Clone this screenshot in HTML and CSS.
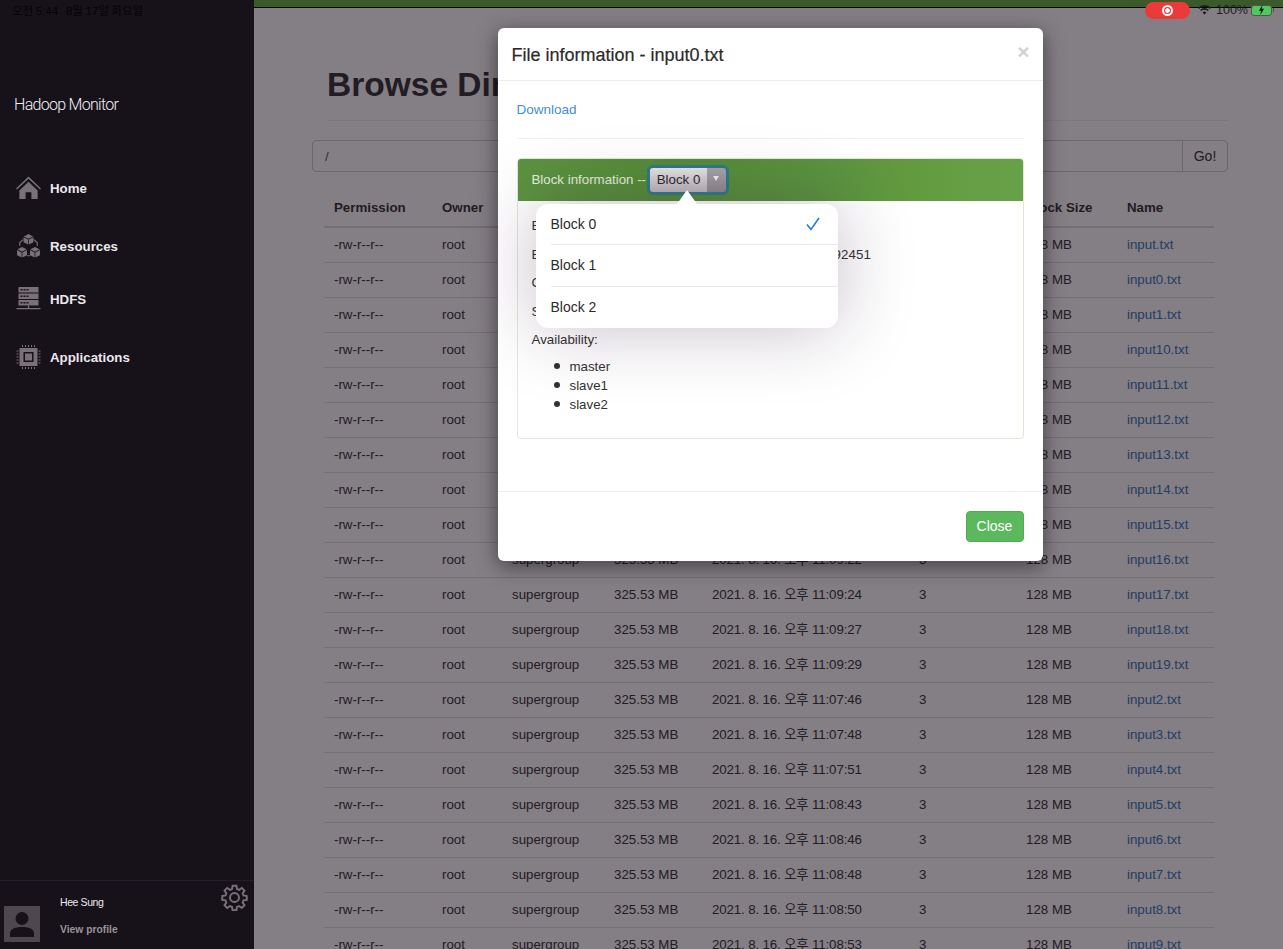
FILE: index.html
```html
<!DOCTYPE html>
<html>
<head>
    <title>Hadoop Monitor</title>
    <meta charset="utf-8">
    <link rel="stylesheet" href="styles.css">
</head>
<body>
    <div class="statusbar">
        <div class="status-time">오전 5:44&nbsp;&nbsp;&nbsp;8월 17일 화요일</div>
        <div class="status-right">
            <div class="rec-pill"><span class="rec-dot"></span></div>
            <svg class="wifi" viewBox="0 0 16 12"><path d="M8 11.500 5.600 9a3.400 3.400 0 0 1 4.800 0zM3.900 7.300 2.600 5.900a7.600 7.600 0 0 1 10.800 0l-1.300 1.400a5.700 5.700 0 0 0-8.200 0zM1.300 4.700 0 3.300a11.300 11.300 0 0 1 16 0l-1.300 1.400a9.400 9.400 0 0 0-13.400 0z"/></svg>
            <span class="battery-text">100%</span>
            <div class="battery"><svg viewBox="0 0 8 12"><path d="M5 0 1 7h2.500L2.500 12 7 4.600H4.300z"/></svg></div>
            <span class="battery-nub"></span>
        </div>
    </div>

    <div class="sidebar">
        <div class="brand">Hadoop Monitor</div>
        <ul class="nav">
            <li>
                <svg viewBox="0 0 26 24"><path d="M13 0 0 12.500l1 1L13 2.500l12 11 1-1zM3.500 14.500 13 5.500l9.500 9V23.500h-6.500v-7h-6v7H3.500z"/></svg>
                <span>Home</span>
            </li>
            <li>
                <svg viewBox="0 0 26 26"><path d="M13 0l5 2.600-5 2.600-5-2.600zM7.600 3.400l5 2.600v5.500l-5-2.600zM18.400 3.400l-5 2.600v5.500l5-2.600zM6 14l5 2.600-5 2.600-5-2.600zM.6 17.400l5 2.600v5.500l-5-2.600zM11.400 17.400l-5 2.600v5.500l5-2.600zM20 14l5 2.600-5 2.600-5-2.600zM14.600 17.400l5 2.600v5.500l-5-2.600zM25.400 17.400l-5 2.600v5.500l5-2.600z"/><path class="line" d="M7 6 3.500 9.500V13M19 6l3.500 3.500V13M11.500 23.500h3"/></svg>
                <span>Resources</span>
            </li>
            <li>
                <svg viewBox="0 0 24 24"><path fill-rule="evenodd" d="M2 0h20v5.500H2zM2 6.500h20V12H2zM2 13h20v5.500H2zM4 2v1.500h2V2zm3 0v1.500h2V2zm3 0v1.500h2V2zM4 8.500V10h2V8.500zm3 0V10h2V8.500zm3 0V10h2V8.500zM4 15v1.500h2V15zm3 0v1.500h2V15zm3 0v1.500h2V15z"/><path d="M11.300 18.500h1.400V21H24v1.300H0V21h11.300z"/></svg>
                <span>HDFS</span>
            </li>
            <li>
                <svg viewBox="0 0 24 24"><path fill-rule="evenodd" d="M3 3h18v18H3zM7 7v10h10V7zm1.500 1.500h7v7h-7z"/><path class="line thin" d="M6 0v2M9 0v2M12 0v2M15 0v2M18 0v2M6 22v2M9 22v2M12 22v2M15 22v2M18 22v2M0 6h2M0 9h2M0 12h2M0 15h2M0 18h2M22 6h2M22 9h2M22 12h2M22 15h2M22 18h2"/></svg>
                <span>Applications</span>
            </li>
        </ul>
        <div class="user">
            <div class="avatar">
                <svg viewBox="0 0 36 36"><circle cx="18" cy="12.500" r="6.500"/><path d="M6 31v-3.500C6 23 11 21 18 21s12 2 12 6.500V31z"/></svg>
            </div>
            <div class="user-info">
                <div class="user-name">Hee Sung</div>
                <div class="user-link">View profile</div>
            </div>
            <svg class="gear" viewBox="0 0 24 24"><path d="M10.300 1.500h3.400l.5 2.900 1.900.8 2.400-1.700 2.400 2.400-1.700 2.400.8 1.900 2.900.5v3.400l-2.900.5-.8 1.900 1.700 2.400-2.400 2.400-2.400-1.700-1.900.8-.5 2.900h-3.400l-.5-2.900-1.900-.8-2.400 1.700-2.400-2.400 1.700-2.400-.8-1.900-2.900-.5v-3.400l2.900-.5.8-1.900-1.700-2.400 2.400-2.400 2.400 1.700 1.900-.8z"/><circle cx="12" cy="12" r="4"/></svg>
        </div>
    </div>

    <div class="main">
        <div class="topbar"></div>
        <div class="content">
            <h1>Browse Directory</h1>
            <div class="path-row">
                <input class="path-input" value="/">
                <button class="go-btn">Go!</button>
            </div>
            <table class="files">
                <thead>
                    <tr><th>Permission</th><th>Owner</th><th>Group</th><th>Size</th><th>Last Modified</th><th>Replication</th><th>Block Size</th><th>Name</th></tr>
                </thead>
                <tbody>
                    <tr><td>-rw-r--r--</td><td>root</td><td>supergroup</td><td>325.53 MB</td><td>2021. 8. 16. 오후 11:06:58</td><td>3</td><td>128 MB</td><td><a href="#">input.txt</a></td></tr>
                    <tr><td>-rw-r--r--</td><td>root</td><td>supergroup</td><td>325.53 MB</td><td>2021. 8. 16. 오후 11:07:01</td><td>3</td><td>128 MB</td><td><a href="#">input0.txt</a></td></tr>
                    <tr><td>-rw-r--r--</td><td>root</td><td>supergroup</td><td>325.53 MB</td><td>2021. 8. 16. 오후 11:07:04</td><td>3</td><td>128 MB</td><td><a href="#">input1.txt</a></td></tr>
                    <tr><td>-rw-r--r--</td><td>root</td><td>supergroup</td><td>325.53 MB</td><td>2021. 8. 16. 오후 11:09:01</td><td>3</td><td>128 MB</td><td><a href="#">input10.txt</a></td></tr>
                    <tr><td>-rw-r--r--</td><td>root</td><td>supergroup</td><td>325.53 MB</td><td>2021. 8. 16. 오후 11:09:04</td><td>3</td><td>128 MB</td><td><a href="#">input11.txt</a></td></tr>
                    <tr><td>-rw-r--r--</td><td>root</td><td>supergroup</td><td>325.53 MB</td><td>2021. 8. 16. 오후 11:09:07</td><td>3</td><td>128 MB</td><td><a href="#">input12.txt</a></td></tr>
                    <tr><td>-rw-r--r--</td><td>root</td><td>supergroup</td><td>325.53 MB</td><td>2021. 8. 16. 오후 11:09:10</td><td>3</td><td>128 MB</td><td><a href="#">input13.txt</a></td></tr>
                    <tr><td>-rw-r--r--</td><td>root</td><td>supergroup</td><td>325.53 MB</td><td>2021. 8. 16. 오후 11:09:13</td><td>3</td><td>128 MB</td><td><a href="#">input14.txt</a></td></tr>
                    <tr><td>-rw-r--r--</td><td>root</td><td>supergroup</td><td>325.53 MB</td><td>2021. 8. 16. 오후 11:09:18</td><td>3</td><td>128 MB</td><td><a href="#">input15.txt</a></td></tr>
                    <tr><td>-rw-r--r--</td><td>root</td><td>supergroup</td><td>325.53 MB</td><td>2021. 8. 16. 오후 11:09:22</td><td>3</td><td>128 MB</td><td><a href="#">input16.txt</a></td></tr>
                    <tr><td>-rw-r--r--</td><td>root</td><td>supergroup</td><td>325.53 MB</td><td>2021. 8. 16. 오후 11:09:24</td><td>3</td><td>128 MB</td><td><a href="#">input17.txt</a></td></tr>
                    <tr><td>-rw-r--r--</td><td>root</td><td>supergroup</td><td>325.53 MB</td><td>2021. 8. 16. 오후 11:09:27</td><td>3</td><td>128 MB</td><td><a href="#">input18.txt</a></td></tr>
                    <tr><td>-rw-r--r--</td><td>root</td><td>supergroup</td><td>325.53 MB</td><td>2021. 8. 16. 오후 11:09:29</td><td>3</td><td>128 MB</td><td><a href="#">input19.txt</a></td></tr>
                    <tr><td>-rw-r--r--</td><td>root</td><td>supergroup</td><td>325.53 MB</td><td>2021. 8. 16. 오후 11:07:46</td><td>3</td><td>128 MB</td><td><a href="#">input2.txt</a></td></tr>
                    <tr><td>-rw-r--r--</td><td>root</td><td>supergroup</td><td>325.53 MB</td><td>2021. 8. 16. 오후 11:07:48</td><td>3</td><td>128 MB</td><td><a href="#">input3.txt</a></td></tr>
                    <tr><td>-rw-r--r--</td><td>root</td><td>supergroup</td><td>325.53 MB</td><td>2021. 8. 16. 오후 11:07:51</td><td>3</td><td>128 MB</td><td><a href="#">input4.txt</a></td></tr>
                    <tr><td>-rw-r--r--</td><td>root</td><td>supergroup</td><td>325.53 MB</td><td>2021. 8. 16. 오후 11:08:43</td><td>3</td><td>128 MB</td><td><a href="#">input5.txt</a></td></tr>
                    <tr><td>-rw-r--r--</td><td>root</td><td>supergroup</td><td>325.53 MB</td><td>2021. 8. 16. 오후 11:08:46</td><td>3</td><td>128 MB</td><td><a href="#">input6.txt</a></td></tr>
                    <tr><td>-rw-r--r--</td><td>root</td><td>supergroup</td><td>325.53 MB</td><td>2021. 8. 16. 오후 11:08:48</td><td>3</td><td>128 MB</td><td><a href="#">input7.txt</a></td></tr>
                    <tr><td>-rw-r--r--</td><td>root</td><td>supergroup</td><td>325.53 MB</td><td>2021. 8. 16. 오후 11:08:50</td><td>3</td><td>128 MB</td><td><a href="#">input8.txt</a></td></tr>
                    <tr><td>-rw-r--r--</td><td>root</td><td>supergroup</td><td>325.53 MB</td><td>2021. 8. 16. 오후 11:08:53</td><td>3</td><td>128 MB</td><td><a href="#">input9.txt</a></td></tr>
                </tbody>
            </table>
        </div>

        <div class="backdrop">
            <div class="modal">
                <div class="modal-head">
                    <h4>File information - input0.txt</h4>
                    <span class="modal-x">×</span>
                </div>
                <div class="modal-body">
                    <a class="download" href="#">Download</a>
                    <hr>
                    <div class="panel">
                        <div class="panel-head">
                            <span>Block information --</span>
                            <div class="select-wrap">
                                <div class="select"><span class="select-label">Block 0</span><span class="select-arrow"></span></div>
                            </div>
                        </div>
                        <div class="panel-body">
                            <p>Block ID: 1073741826</p>
                            <p class="pool-id">Block Pool ID: BP-112937405-192.168.0.10-1629092451</p>
                            <p>Generation Stamp: 1002</p>
                            <p>Size: 134217728</p>
                            <p>Availability:</p>
                            <ul>
                                <li>master</li>
                                <li>slave1</li>
                                <li>slave2</li>
                            </ul>
                        </div>
                    </div>
                </div>
                <div class="modal-foot">
                    <button class="close-btn">Close</button>
                </div>

                <div class="popup">
                    <div class="popup-row">Block 0<svg class="check" viewBox="0 0 14 14"><path d="M1 7.500 5 12.500 13 1"/></svg></div>
                    <div class="popup-row">Block 1</div>
                    <div class="popup-row">Block 2</div>
                </div>
            </div>
        </div>
    </div>
</body>
</html>
```

FILE: styles.css
```css
* { box-sizing: border-box; }
html, body { margin: 0; height: 949px; overflow: hidden; }
body { display: flex; font-family: "Liberation Sans", Arial, "Noto Sans CJK KR", sans-serif; font-size: 13.3px; color: #333; background: #17111a; }

/* ipad status bar, sits over everything */
.statusbar { position: absolute; top: 0; left: 0; width: 1283px; height: 20px; z-index: 20; display: flex; justify-content: space-between; align-items: center; font-size: 11.5px; }
.status-time { padding-left: 12px; margin-top: -1px; color: #050306; word-spacing: -0.6px; }
.status-right { display: flex; align-items: center; margin-right: 9px; color: #1f1b20; }
.rec-pill { width: 45px; height: 17px; border-radius: 9px; background: #ec3a3a; display: flex; align-items: center; justify-content: center; margin-right: 8px; }
.rec-dot { width: 11px; height: 11px; border-radius: 50%; border: 2px solid #fff; background: radial-gradient(circle, #fff 0 2px, #ec3a3a 2.5px); }
.wifi { width: 13px; height: 10px; fill: #1c181d; margin-right: 5px; }
.battery-text { font-size: 12.5px; margin-right: 3px; }
.battery { width: 21px; height: 11px; border-radius: 3px; border: 1px solid #555; background: #4fc95c; display: flex; align-items: center; justify-content: center; }
.battery svg { width: 7px; height: 10px; fill: #111; }
.battery-nub { width: 1px; height: 4px; margin-left: 1px; background: #555; }

/* sidebar */
.sidebar { width: 254px; height: 949px; flex: none; background: #17111a; position: relative; display: flex; flex-direction: column; }
.brand { padding: 95px 0 0 14px; font-family: Roboto, "Liberation Sans", sans-serif; font-weight: 300; font-size: 16px; line-height: 20px; letter-spacing: -0.7px; color: #f2f0f3; }
.nav { list-style: none; margin: 0; padding: 0 0 0 16px; }
.nav li { display: flex; align-items: center; height: 26px; color: #ebe8ec; font-weight: bold; font-size: 13.3px; }
.nav li:nth-child(1) { margin-top: 60px; }
.nav li:nth-child(2) { margin-top: 32px; }
.nav li:nth-child(3) { margin-top: 27px; }
.nav li:nth-child(4) { margin-top: 32px; }
.nav svg { width: 25px; height: 24px; fill: #7a7079; margin-right: 9px; flex: none; }
.nav .line { fill: none; stroke: #7a7079; stroke-width: 1.2; }
.nav .thin { stroke-width: 1; }
.user { margin-top: auto; height: 69px; border-top: 1px solid #251e28; position: relative; padding-left: 4px; display: flex; }
.avatar { width: 36px; height: 36px; background: #4e474f; margin-top: 25px; }
.avatar svg { display: block; width: 36px; height: 36px; fill: #17111a; }
.user-info { padding-left: 20px; }
.user-name { font-size: 10.5px; margin-top: 15px; line-height: 12px; letter-spacing: -0.4px; color: #eeebee; }
.user-link { font-size: 10.3px; margin-top: 16px; line-height: 12px; font-weight: bold; color: #9a9399; }
.gear { position: absolute; top: 3px; right: 6px; width: 27px; height: 27px; fill: none; stroke: #7a7079; stroke-width: 1.7; }

/* main column */
.main { flex: 1; height: 949px; position: relative; background: #fff; overflow: hidden; }
.topbar { height: 8px; background: #68b340; border-bottom: 1px solid #000; }
.content { padding: 0 55px 0 58px; }
h1 { margin: 0 0 0 15px; padding: 57px 0 15px; font-size: 33.500px; line-height: 40px; font-weight: bold; color: #333; border-bottom: 1px solid #eee; }
.path-row { display: flex; margin-top: 19px; }
.path-input { flex: 1; height: 32px; border: 1px solid #ccc; border-radius: 4px 0 0 4px; padding: 0 12px; font: inherit; color: #555; }
.go-btn { width: 46px; height: 32px; margin-left: -1px; border: 1px solid #ccc; border-radius: 0 4px 4px 0; background: #fff; font: inherit; font-size: 14px; color: #333; }
.files { width: 890px; margin: 18px 0 0 12px; border-collapse: collapse; table-layout: fixed; }
.files th { text-align: left; height: 37px; padding: 0 10px 1px; font-size: 13.3px; font-weight: bold; border-bottom: 2px solid #ddd; }
.files td { height: 35px; padding: 0 10px; line-height: 16px; border-top: 1px solid #ddd; }
.files td:nth-child(5) { letter-spacing: -0.13px; }
.files th:nth-child(1) { width: 108px; }
.files th:nth-child(2) { width: 70px; }
.files th:nth-child(3) { width: 102px; }
.files th:nth-child(4) { width: 98px; }
.files th:nth-child(5) { width: 207px; }
.files th:nth-child(6) { width: 107px; }
.files th:nth-child(7) { width: 101px; }
a { color: #337ab7; text-decoration: none; }

/* modal */
.backdrop { position: absolute; top: 0; left: 0; right: 0; bottom: 0; background: rgba(20, 8, 22, 0.52); display: flex; justify-content: center; padding: 28px 0 0 3px; }
.modal { width: 545px; height: 533px; background: #fff; border-radius: 6px; box-shadow: 0 5px 20px rgba(0, 0, 0, 0.5); position: relative; display: flex; flex-direction: column; }
.modal-head { height: 53px; padding: 0 14px; border-bottom: 1px solid #efe8f0; display: flex; align-items: center; justify-content: space-between; }
.modal-head h4 { margin: 2px 0 0; font-size: 18px; font-weight: normal; color: #2a2a2a; -webkit-text-stroke: 0.2px #2a2a2a; }
.modal-x { font-size: 21px; font-weight: bold; color: #d4ced6; margin: -4px -1px 0 0; }
.modal-body { flex: 1; padding: 21px 19px 0; }
.download { display: block; font-size: 13.500px; line-height: 16px; color: #3f8fd0; }
.modal-body hr { border: 0; border-top: 1px solid #f3eef4; margin: 20px 0 19px; }
.panel { height: 281px; border: 1px solid #e4e6da; border-radius: 4px; overflow: hidden; }
.panel-head { height: 42px; padding: 0 0 1px 14px; background: linear-gradient(90deg, #5c9340, #558c38 30%, #5a9340 60%, #62993f 75%, #68a248); color: #e6f0df; display: flex; align-items: center; gap: 1px; }
.select-wrap { border: 3px solid #2e7a8c; border-radius: 6px; }
.select { display: flex; width: 76px; height: 24px; border-radius: 3px; overflow: hidden; }
.select-label { flex: 1; display: flex; align-items: center; justify-content: center; background: linear-gradient(#e8e6e8, #b9b5ba); color: #2a2a2a; font-size: 13.3px; }
.select-arrow { width: 19px; background: linear-gradient(#a9a5aa, #8d898e); position: relative; }
.select-arrow::after { content: ""; position: absolute; left: 6px; top: 8px; border: 3.5px solid transparent; border-top: 5px solid #eee; }
.panel-body { padding: 15px 14px 0; }
.panel-body p { margin: 0; height: 28.500px; line-height: 20px; }
.panel-body .pool-id { letter-spacing: 0.08px; white-space: nowrap; }
.panel-body ul { list-style: none; margin: -2px 0 0; padding-left: 38px; }
.panel-body li { display: flex; align-items: center; line-height: 19px; }
.panel-body li::before { content: ""; width: 6px; height: 6px; margin: 0 10px 0 -16px; border-radius: 50%; background: #333; }
.modal-foot { height: 70px; border-top: 1px solid #f0ebf1; display: flex; justify-content: flex-end; align-items: center; padding: 0 19px 1px 0; }
.close-btn { width: 58px; height: 31px; background: #5cb85c; border: 1px solid #4cae4c; border-radius: 4px; color: #fff; font: inherit; font-size: 14px; }

/* native select popover */
.popup { position: absolute; top: 176px; left: 38px; width: 302px; background: #fff; border-radius: 12px; box-shadow: 0 0 75px rgba(50, 20, 55, 0.28); z-index: 5; }
.popup::before { content: ""; position: absolute; top: -14px; left: 141px; border: 10px solid transparent; border-top: 0; border-bottom: 14px solid #fff; }
.popup-row { height: 41.300px; margin-left: 15px; display: flex; align-items: center; justify-content: space-between; font-size: 14px; color: #2b2b2b; border-bottom: 1px solid #efe6f1; padding-right: 18px; }
.popup-row:last-child { border-bottom: 0; }
.check { width: 14px; height: 14px; fill: none; stroke: #1a7df0; stroke-width: 1.6; }
```
